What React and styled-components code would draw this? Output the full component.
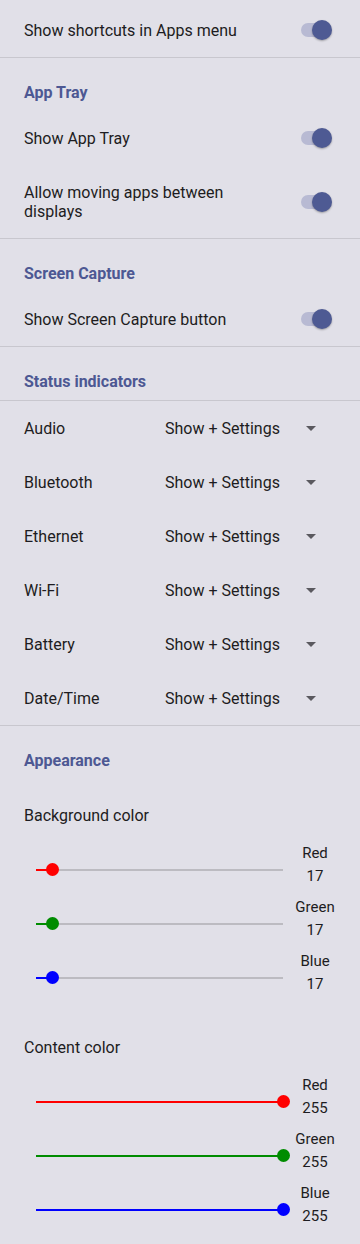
import React from "react";
import styled, { createGlobalStyle } from "styled-components";

const Global = createGlobalStyle`
  html, body { margin: 0; padding: 0; background: #e1e0e8; }
  body { font-family: Roboto, "Noto Sans", sans-serif; -webkit-font-smoothing: antialiased; }
`;

const Page = styled.div`
  width: 360px;
  min-height: 1244px;
  background: #e1e0e8;
  color: #1d1c21;
  font-size: 16px;
  padding-top: 3px;
  padding-bottom: 10px;
  box-sizing: border-box;
`;

const Divider = styled.div`
  height: 1px;
  background: #c8c7ce;
`;

const Header = styled.div`
  height: 53px;
  box-sizing: border-box;
  padding: 24px 24px 0;
  line-height: 22px;
  font-weight: 700;
  font-size: 16px;
  color: #4d5893;
`;

const ToggleRow = styled.div`
  display: flex;
  align-items: center;
  min-height: 54px;
  box-sizing: border-box;
  padding: ${(p) => (p.$multi ? "18px 28px 17px 24px" : "0 28px 0 24px")};
`;

const RowLabel = styled.div`
  flex: 1;
  line-height: 19px;
  padding-right: 60px;
`;

const SwitchWrap = styled.div`
  position: relative;
  width: 31px;
  height: 20px;
  flex: none;
`;

const SwitchTrack = styled.div`
  position: absolute;
  left: 0;
  top: 3px;
  width: 30px;
  height: 14px;
  border-radius: 7px;
  background: #b8bad3;
`;

const SwitchThumb = styled.div`
  position: absolute;
  right: 0;
  top: 0;
  width: 20px;
  height: 20px;
  border-radius: 50%;
  background: #4e5a93;
  box-shadow: 0 1px 2px rgba(0, 0, 0, 0.3);
`;

const Switch = () => (
  <SwitchWrap>
    <SwitchTrack />
    <SwitchThumb />
  </SwitchWrap>
);

const SelectRow = styled.div`
  display: flex;
  align-items: center;
  height: 54px;
  padding: 0 44px 0 24px;
`;

const SelectLabel = styled.div`
  width: 141px;
`;

const SelectValue = styled.div`
  flex: 1;
`;

const Arrow = styled.div`
  width: 0;
  height: 0;
  border-left: 5px solid transparent;
  border-right: 5px solid transparent;
  border-top: 5px solid #5a595f;
`;

const SubLabel = styled.div`
  padding: ${(p) => p.$top}px 24px 11px;
  line-height: 22px;
`;

const SliderRow = styled.div`
  display: flex;
  align-items: center;
  height: 54px;
  padding: 0 13px 0 36px;
`;

const Track = styled.div`
  position: relative;
  flex: 1;
  height: 2px;
  margin-top: 9px;
  background: #bcbbc1;
`;

const Active = styled.div`
  position: absolute;
  left: 0;
  top: 0;
  height: 2px;
  background: ${(p) => p.$color};
`;

const Thumb = styled.div`
  position: absolute;
  top: -5.5px;
  width: 13px;
  height: 13px;
  margin-left: -6.5px;
  border-radius: 50%;
  background: ${(p) => p.$color};
`;

const ValueCol = styled.div`
  width: 64px;
  text-align: center;
  line-height: 23px;
  font-size: 15px;
`;

const Slider = ({ name, color, value }) => {
  const pct = (value / 255) * 100;
  return (
    <SliderRow>
      <Track>
        <Active $color={color} style={{ width: `${pct}%` }} />
        <Thumb $color={color} style={{ left: `${pct}%` }} />
      </Track>
      <ValueCol>
        <div>{name}</div>
        <div>{value}</div>
      </ValueCol>
    </SliderRow>
  );
};

const indicators = ["Audio", "Bluetooth", "Ethernet", "Wi-Fi", "Battery", "Date/Time"];
const channels = [
  ["Red", "#ff0000"],
  ["Green", "#008c00"],
  ["Blue", "#0000ff"],
];

export default function App() {
  return (
    <Page>
      <Global />
      <ToggleRow>
        <RowLabel>Show shortcuts in Apps menu</RowLabel>
        <Switch />
      </ToggleRow>
      <Divider />
      <Header>App Tray</Header>
      <ToggleRow>
        <RowLabel>Show App Tray</RowLabel>
        <Switch />
      </ToggleRow>
      <ToggleRow $multi>
        <RowLabel>Allow moving apps between displays</RowLabel>
        <Switch />
      </ToggleRow>
      <Divider />
      <Header>Screen Capture</Header>
      <ToggleRow>
        <RowLabel>Show Screen Capture button</RowLabel>
        <Switch />
      </ToggleRow>
      <Divider />
      <Header>Status indicators</Header>
      <Divider />
      {indicators.map((n) => (
        <SelectRow key={n}>
          <SelectLabel>{n}</SelectLabel>
          <SelectValue>Show + Settings</SelectValue>
          <Arrow />
        </SelectRow>
      ))}
      <Divider />
      <Header>Appearance</Header>
      <SubLabel $top={26}>Background color</SubLabel>
      {channels.map(([n, c]) => (
        <Slider key={n} name={n} color={c} value={17} />
      ))}
      <SubLabel $top={37}>Content color</SubLabel>
      {channels.map(([n, c]) => (
        <Slider key={n} name={n} color={c} value={255} />
      ))}
    </Page>
  );
}
